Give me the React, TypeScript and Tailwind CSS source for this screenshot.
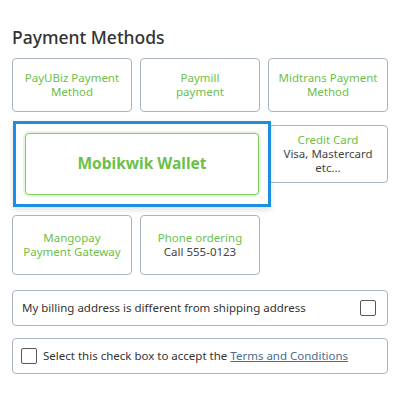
const Card = ({ title, sub }: { title: string[]; sub?: string }) => (
  <button className="flex flex-col items-center justify-center rounded border border-[#aab4c1] bg-white px-1 text-center text-[11.5px] leading-[14px]">
    {title.map((t) => (
      <span key={t} className="text-[#6cbf4a]">{t}</span>
    ))}
    {sub && <span className="text-[#444]">{sub}</span>}
  </button>
)

export default function App() {
  return (
    <div className="h-[400px] w-[400px] bg-white px-3 pt-[26px] font-['Noto_Sans',sans-serif] text-[#333]">
      <h2 className="text-[17.5px] font-medium leading-[22px] text-[#333]">Payment Methods</h2>

      <div className="mt-[10px] flex flex-col">
        <div className="grid grid-cols-[120px_120px_120px] gap-x-2">
          <div className="grid h-[54px]"><Card title={['PayUBiz Payment', 'Method']} /></div>
          <div className="grid h-[54px]"><Card title={['Paymill', 'payment']} /></div>
          <div className="grid h-[54px]"><Card title={['Midtrans Payment', 'Method']} /></div>
        </div>

        <div className="mt-[9px] flex items-start">
          <div className="relative z-10 ml-px flex h-[86px] w-[258px] border-[3px] border-[#1d8fe1] bg-white p-[9px] shadow-[0_3px_6px_rgba(0,0,0,0.12)]">
            <div className="flex flex-1 items-center justify-center rounded border-[1.5px] border-[#7ccb5c] shadow-[0_0_0_2px_rgba(124,203,92,0.18)]">
              <span className="text-[15.5px] font-bold text-[#6cbf4a]">Mobikwik Wallet</span>
            </div>
          </div>
          <div className="-ml-[3px] mt-[4px] grid h-[58px] w-[120px]">
            <Card title={['Credit Card']} sub="Visa, Mastercard etc..." />
          </div>
        </div>

        <div className="mt-[8px] grid grid-cols-[120px_120px_120px] gap-x-2">
          <div className="grid h-[60px]"><Card title={['Mangopay', 'Payment Gateway']} /></div>
          <div className="grid h-[60px]"><Card title={['Phone ordering']} sub="Call 555-0123" /></div>
        </div>
      </div>

      <label className="mt-[15px] flex h-[36px] w-[376px] items-center justify-between rounded border border-[#aab4c1] pl-[9px] pr-[11px] text-[11.5px]">
        <span>My billing address is different from shipping address</span>
        <span className="h-4 w-4 rounded-[2px] border border-[#555]" />
      </label>

      <label className="mt-[12px] flex h-[36px] w-[376px] items-center gap-[6px] rounded border border-[#aab4c1] pl-[8px] text-[11.5px]">
        <span className="h-4 w-4 rounded-[2px] border border-[#555]" />
        <span>
          Select this check box to accept the{' '}
          <a className="text-[#4b6b8c] underline">Terms and Conditions</a>
        </span>
      </label>
    </div>
  )
}
